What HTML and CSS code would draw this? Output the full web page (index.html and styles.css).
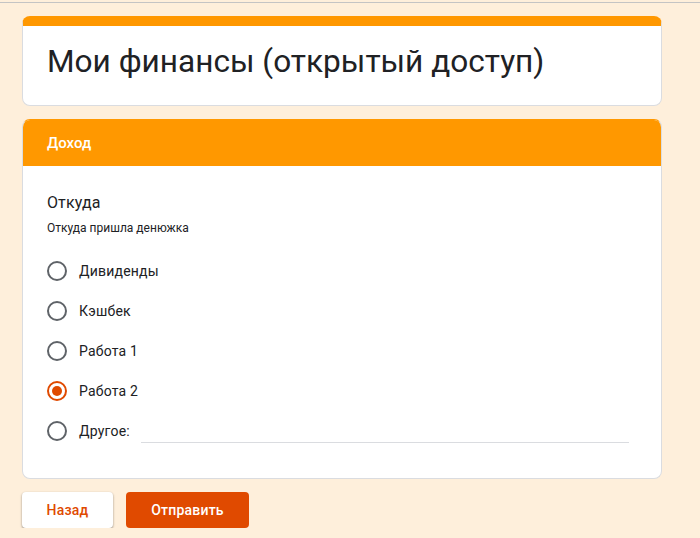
FILE: index.html
```html
<!DOCTYPE html>
<html lang="ru">
<head>
    <meta charset="UTF-8">
    <meta name="viewport" content="width=device-width, initial-scale=1.0">
    <title>Мои финансы (открытый доступ)</title>
    <link rel="stylesheet" href="styles.css">
</head>
<body>
    <div class="topline"></div>

    <div class="page">
        <div class="card title-card">
            <h1>Мои финансы (открытый доступ)</h1>
        </div>

        <div class="card section-card">
            <div class="section-header">Доход</div>
            <div class="question">
                <div class="question-title">Откуда</div>
                <div class="question-desc">Откуда пришла денюжка</div>

                <div class="options">
                    <label class="option">
                        <span class="radio"></span>
                        <span>Дивиденды</span>
                    </label>
                    <label class="option">
                        <span class="radio"></span>
                        <span>Кэшбек</span>
                    </label>
                    <label class="option">
                        <span class="radio"></span>
                        <span>Работа 1</span>
                    </label>
                    <label class="option">
                        <span class="radio checked"></span>
                        <span>Работа 2</span>
                    </label>
                    <label class="option">
                        <span class="radio"></span>
                        <span>Другое:</span>
                        <span class="other-input"></span>
                    </label>
                </div>
            </div>
        </div>

        <div class="buttons">
            <button class="btn btn-back">Назад</button>
            <button class="btn btn-submit">Отправить</button>
        </div>
    </div>
</body>
</html>
```

FILE: styles.css
```css
body {
    font-family: Roboto, "Liberation Sans", Arial, sans-serif;
    margin: 0;
    background: #feefdb;
    color: #202124;
}
.topline {
    margin-top: 2px;
    border-top: 1px solid #c4c4c4;
}
.page {
    width: 640px;
    margin: 0 0 0 22px;
    padding-top: 13px;
}
.card {
    background: white;
    border: 1px solid #dadce0;
    border-radius: 8px;
    overflow: hidden;
    margin-bottom: 12px;
}
.title-card {
    border-top: 10px solid #ff9800;
}
.title-card h1 {
    margin: 0;
    padding: 16px 24px 23px;
    font-size: 31.6px;
    font-weight: 400;
    line-height: 40px;
}
.section-card {
    border-top: 1px solid #ff9800;
    margin-top: 13px;
}
.section-header {
    background: #ff9800;
    color: white;
    font-size: 15px;
    font-weight: 500;
    height: 46px;
    line-height: 46px;
    padding: 0 24px;
}
.question {
    padding: 25px 24px 27px;
}
.question-title {
    font-size: 16px;
    line-height: 24px;
    letter-spacing: 0.1px;
}
.question-desc {
    font-size: 12px;
    line-height: 18px;
    margin-top: 4px;
}
.options {
    margin-top: 14px;
}
.option {
    display: flex;
    align-items: center;
    height: 40px;
    font-size: 14px;
    letter-spacing: 0.2px;
}
.radio {
    box-sizing: border-box;
    width: 20px;
    height: 20px;
    border: 2px solid #5f6368;
    border-radius: 50%;
    margin-right: 12px;
    display: flex;
    align-items: center;
    justify-content: center;
}
.radio.checked {
    border-color: #e04a00;
}
.radio.checked::after {
    content: "";
    width: 10px;
    height: 10px;
    border-radius: 50%;
    background: #e04a00;
}
.other-input {
    flex: 1;
    margin-left: 11px;
    margin-right: 8px;
    margin-top: 22px;
    border-bottom: 1px solid #dadce0;
}
.buttons {
    display: flex;
    gap: 13px;
    margin-top: 13px;
}
.btn {
    height: 36px;
    border: none;
    border-radius: 4px;
    font-family: inherit;
    font-size: 14px;
    font-weight: 500;
    letter-spacing: 0.2px;
    cursor: pointer;
}
.btn-back {
    width: 91px;
    background: white;
    color: #e04a00;
    box-shadow: 0 1px 2px rgba(0,0,0,0.3), 0 1px 3px rgba(0,0,0,0.15);
}
.btn-submit {
    width: 123px;
    background: #e04a00;
    color: white;
}
```
